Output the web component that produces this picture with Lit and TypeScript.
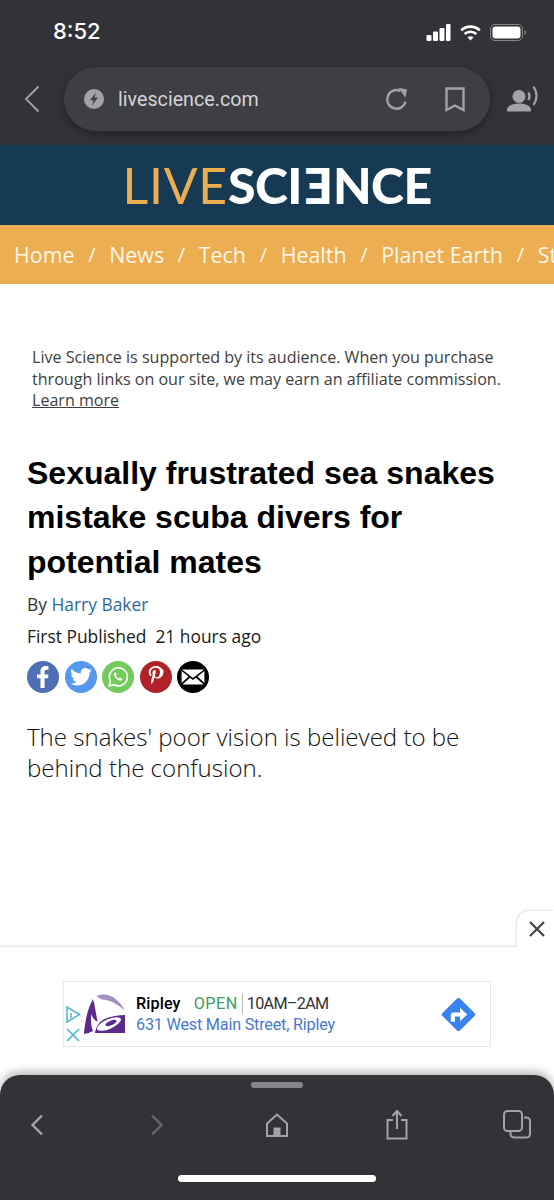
import { LitElement, html, css } from "lit";
import { customElement } from "lit/decorators.js";

@customElement("app-root")
export class AppRoot extends LitElement {
  static styles = css`
    :host { display: flex; flex-direction: column; width: 554px; height: 1200px; background: #fff; overflow: hidden; position: relative; font-family: "Open Sans", sans-serif; }
    svg { display: block; flex: none; }
    .chrome { background: #323337; height: 145px; flex: none; display: flex; flex-direction: column; }
    .status { display: flex; justify-content: space-between; align-items: center; height: 62px; padding: 0 28px 0 53px; }
    .time { color: #fff; font: 500 22px/30px Inter, sans-serif; padding-bottom: 1px; }
    .status-icons { display: flex; align-items: center; gap: 9px; margin-top: 2px; }
    .urlrow { display: flex; align-items: center; padding: 5px 0 0 24px; }
    .back { width: 40px; }
    .urlbar { width: 426px; height: 64px; border-radius: 32px; background: #3e3f44; box-shadow: 0 3px 10px rgba(0,0,0,.35); display: flex; align-items: center; padding: 0 25px 0 19px; box-sizing: border-box; }
    .urltext { color: #d4d4d6; font: 400 19.7px/24px Roboto, sans-serif; margin: 2px 0 0 13px; flex: 1; }
    .urlbar .reload { margin-right: 36px; }
    .reader { margin-left: 17px; }
    .logoband { background: #163a54; height: 80px; flex: none; display: flex; justify-content: center; align-items: center; }
    .logo { font: 50px/80px Lato, sans-serif; display: flex; white-space: nowrap; }
    .live { color: #ecae50; font-weight: 400; letter-spacing: .8px; }
    .sci { color: #fff; font-weight: 900; letter-spacing: -.6px; }
    .rev { display: inline-block; transform: scaleX(-1); margin-left: 3px; }
    .nav { background: #ecae50; height: 59px; flex: none; display: flex; align-items: center; padding-left: 14px; color: #fdf6ea; font-size: 21.4px; line-height: 30px; white-space: nowrap; overflow: hidden; }
    .nav i { font-style: normal; margin: 0 13.7px; font-size: 20px; }
    main { flex: 1; min-height: 0; padding: 63px 0 0 27px; }
    .disclosure { margin: 0 0 0 5px; width: 490px; color: #404040; font-size: 16.08px; line-height: 21.5px; }
    .disclosure a { color: inherit; text-decoration: underline; }
    h1 { margin: 39px 0 0; font: 700 32px/44.7px "Liberation Sans", Arial, sans-serif; color: #000; width: 510px; }
    .by { margin: 7px 0 0; font-size: 17.4px; line-height: 24px; color: #333; }
    .by a { color: #2b6a9e; }
    .pub { margin: 8px 0 0; font-size: 17.4px; line-height: 24px; color: #1a1a1a; }
    .share { display: flex; gap: 5.6px; margin-top: 13px; }
    .share span { width: 32px; height: 32px; border-radius: 50%; display: flex; align-items: center; justify-content: center; }
    .deck { margin: 28px 0 0; width: 470px; font-weight: 300; font-size: 24.05px; line-height: 31px; color: #111; }
    .adbar { height: 128px; flex: none; background: #fff; box-shadow: 0 -1px 2px rgba(0,0,0,.12); display: flex; align-items: flex-start; justify-content: center; padding-top: 34px; box-sizing: border-box; position: relative; }
    .closetab { position: absolute; right: 0; top: -36px; width: 37px; height: 36px; padding-left: 2px; box-sizing: border-box; background: #fff; border-radius: 12px 0 0 0; box-shadow: -1px -1px 2px rgba(0,0,0,.12); display: flex; align-items: center; justify-content: center; }
    .ad { width: 428px; height: 66px; box-sizing: border-box; border: 1px solid #e6e6e6; display: flex; align-items: center; padding-left: 2px; }
    .adicons { display: flex; flex-direction: column; gap: 5px; margin-top: 20px; }
    .adlogo { margin-left: 2px; }
    .adtext { margin-left: 9px; flex: 1; font: 400 16.2px/21px Roboto, sans-serif; white-space: nowrap; letter-spacing: -.2px; }
    .l1 { color: #111; display: flex; align-items: center; }
    .ripley { font-weight: 500; color: #000; letter-spacing: .1px; }
    .open { color: #3f9c5f; margin-left: 13px; letter-spacing: .5px; }
    .hours { color: #333; margin-left: 4px; padding-left: 4px; border-left: 1px solid #bbb; line-height: 20px; letter-spacing: -.7px; }
    .l2 { color: #4a78d0; }
    .dir { margin-right: 13px; }
    .toolbar { height: 125px; flex: none; background: #323337; border-radius: 20px 20px 0 0; box-shadow: 0 -3px 10px rgba(0,0,0,.3); display: flex; flex-direction: column; align-items: center; position: relative; }
    .grab { width: 52px; height: 6px; border-radius: 3px; background: #85868b; margin-top: 7px; flex: none; }
    .tools { align-self: stretch; display: grid; grid-template-columns: repeat(5, 120px); justify-content: center; justify-items: center; align-items: center; height: 50px; margin-top: 12px; flex: none; }
    .homebar { width: 198px; height: 7px; border-radius: 4px; background: #fff; margin-top: 25px; flex: none; }
  `;

  render() {
    const grey = "#a2a3a7";
    return html`
      <div class="chrome">
        <div class="status">
          <span class="time">8:52</span>
          <div class="status-icons">
            <svg width="25" height="18" viewBox="0 0 24 18" fill="#fff"><rect x="0" y="12" width="5" height="6" rx="1.2"/><rect x="6.5" y="8.5" width="5" height="9.5" rx="1.2"/><rect x="13" y="5" width="5" height="13" rx="1.2"/><rect x="19.5" y="1" width="4.5" height="17" rx="1.2"/></svg>
            <svg width="21" height="17" viewBox="0 0 21 17" fill="none" stroke="#fff" stroke-width="2.6"><path d="M1.2 6.4c5.3-5 13.3-5 18.6 0"/><path d="M4.6 10c3.4-3 8.4-3 11.8 0"/><path d="M10.5 16.5l-3-3.2c1.7-1.3 4.3-1.3 6 0z" fill="#fff" stroke="none"/></svg>
            <svg width="36" height="17" viewBox="0 0 36 17" fill="none"><rect x=".5" y=".5" width="32" height="16" rx="4.5" stroke="#85868a"/><rect x="2.5" y="2.5" width="28" height="12" rx="3" fill="#fff"/><path d="M34.5 6v5c.9-.3 1.5-1.400 1.5-2.500S35.400 6.300 34.500 6z" fill="#85868a"/></svg>
          </div>
        </div>
        <div class="urlrow">
          <div class="back"><svg width="16" height="28" viewBox="0 0 16 28" fill="none" stroke="#a2a3a7" stroke-width="1.8"><path d="M14.500 1.500L2 14l12.500 12.500"/></svg></div>
          <div class="urlbar">
            <svg width="22" height="22" viewBox="0 0 22 22"><circle cx="11" cy="11" r="10" fill="#a2a3a7"/><path d="M12.800 4.500L7 12.300h3.400l-1.300 5.200 5.900-7.900h-3.500z" fill="#3e3f44"/></svg>
            <span class="urltext">livescience.com</span>
            <svg class="reload" width="24" height="24" viewBox="0 0 24 24" fill="none" stroke="#a2a3a7" stroke-width="2.4"><path d="M20.500 14.800A9.300 9.300 0 1 1 15.500 4"/><path d="M13.500 0.800L22 2.500l-1.500 8.200z" fill="#a2a3a7" stroke="none"/></svg>
            <svg width="20" height="25" viewBox="0 0 20 25" fill="none" stroke="#a2a3a7" stroke-width="2.4"><path d="M1.500 1.500h17v21.500L10 18.500 1.500 23z"/></svg>
          </div>
          <svg class="reader" width="32" height="28" viewBox="0 0 32 28" fill="#a2a3a7"><circle cx="12" cy="11.500" r="6.500"/><path d="M0 25c0-4 5-6.500 12-6.500S24 21 24 25v1.500H0z"/><path d="M21.500 7.500c1.300 2.400 1.300 5.100 0 7.500" fill="none" stroke="#a2a3a7" stroke-width="2.4"/><path d="M26.500 1.500c3.800 5.800 3.800 12.700 0 18.500" fill="none" stroke="#a2a3a7" stroke-width="2.2"/></svg>
        </div>
      </div>
      <div class="logoband">
        <div class="logo"><span class="live">LIVE</span><span class="sci">SCI</span><span class="sci rev">E</span><span class="sci">NCE</span></div>
      </div>
      <nav class="nav">Home<i>/</i>News<i>/</i>Tech<i>/</i>Health<i>/</i>Planet Earth<i>/</i>St</nav>
      <main>
        <p class="disclosure">Live Science is supported by its audience. When you purchase through links on our site, we may earn an affiliate commission. <a>Learn more</a></p>
        <h1>Sexually frustrated sea snakes mistake scuba divers for potential mates</h1>
        <p class="by">By <a>Harry Baker</a></p>
        <p class="pub">First Published&nbsp; 21 hours ago</p>
        <div class="share">
          <span style="background:#4f6fb5"><svg width="12" height="22" viewBox="0 0 12 22" fill="#fff"><path d="M3.500 22V12.300H0V8.400h3.500V5.600C3.500 2 5.600 0 8.800 0c1.200 0 2.300.1 2.700.2v3.500H9.600c-1.800 0-2 .9-2 2.100v2.600h3.900l-.5 3.900H7.600V22z"/></svg></span>
          <span style="background:#5598ee"><svg width="22" height="18" viewBox="0 0 24 20" fill="#fff"><path d="M24 2.400c-.9.400-1.800.7-2.800.8 1-.6 1.800-1.500 2.200-2.700-1 .6-2 1-3.100 1.200A4.900 4.900 0 0 0 11.900 6.200 14 14 0 0 1 1.700.9a4.900 4.900 0 0 0 1.500 6.600c-.8 0-1.600-.2-2.200-.6v.1c0 2.400 1.700 4.400 3.900 4.800-.7.200-1.500.2-2.200.1.600 2 2.400 3.400 4.600 3.400A9.900 9.900 0 0 1 0 17.300 14 14 0 0 0 7.500 19.500c9.100 0 14-7.500 14-14v-.6c1-.7 1.800-1.500 2.500-2.500z"/></svg></span>
          <span style="background:#73cb5c"><svg width="22" height="22" viewBox="0 0 22 22" fill="none"><path d="M2 20l1.400-5A9 9 0 1 1 7 18.700z" stroke="#fff" stroke-width="1.6"/><path d="M8 6.500c-1 .6-1.300 1.800-.8 3 1 2.400 2.800 4.100 5.200 5 1.300.4 2.400 0 3-1 .2-.4.200-.8-.2-1l-1.700-.8c-.4-.2-.6 0-.9.300l-.5.600c-1.500-.5-2.600-1.600-3.200-3.100l.5-.5c.3-.3.300-.6.200-.9l-.7-1.600c-.2-.4-.5-.4-.9 0z" fill="#fff"/></svg></span>
          <span style="background:#b02227"><svg width="16" height="21" viewBox="0 0 16 21" fill="#fff"><path d="M8.300 0C3.200 0 .7 3.400.7 6.300c0 1.700.7 3.300 2 3.900.2.100.4 0 .5-.3l.2-.8c.1-.2 0-.3-.1-.5-.4-.5-.7-1.100-.7-2 0-2.600 2-4.900 5.100-4.900 2.800 0 4.300 1.700 4.300 4 0 3-1.300 5.600-3.300 5.600-1.100 0-1.900-.9-1.700-2 .3-1.300.9-2.800.9-3.700 0-.9-.5-1.600-1.400-1.600-1.100 0-2 1.200-2 2.700 0 1 .3 1.600.3 1.600l-1.400 5.700c-.4 1.700-.1 3.700 0 3.900 0 .1.200.2.300.1.100-.2 1.600-2 2.100-3.800l.8-3.100c.4.800 1.600 1.500 2.800 1.500 3.700 0 6.200-3.400 6.200-7.900C14.600 2.800 11.700 0 8.300 0z"/></svg></span>
          <span style="background:#000"><svg width="24" height="18" viewBox="0 0 24 18"><path d="M1 1.500h22L12 10z M.6 3L7.500 8.500.6 15z M23.400 3L16.500 8.500l6.900 6.500z M9 9.700l3 2.300 3-2.300 7.600 6.800H1.400z" fill="#fff"/></svg></span>
        </div>
        <p class="deck">The snakes' poor vision is believed to be behind the confusion.</p>
      </main>
      <div class="adbar">
        <div class="closetab"><svg width="18" height="18" viewBox="0 0 18 18" stroke="#444" stroke-width="2.2"><path d="M2 2l14 14M16 2L2 16"/></svg></div>
        <div class="ad">
          <div class="adicons">
            <svg width="15" height="17" viewBox="0 0 15 17" fill="none" stroke="#4fb8d2" stroke-width="1.5"><path d="M1 1l12.500 7.500L1 16z"/><path d="M5 7v5" /></svg>
            <svg width="14" height="14" viewBox="0 0 14 14" stroke="#4fb8d2" stroke-width="1.7"><path d="M1 1l12 12M13 1L1 13"/></svg>
          </div>
          <svg class="adlogo" width="44" height="42" viewBox="0 0 44 42"><path d="M13 3C24 -2 36 5 42 18 35 11 27 7 19 6.500z" fill="#a48fc4"/><path d="M10 6C5 15 2 27 1 41c3-.5 6-1.500 9-3-2-5-2.500-11-1.500-17 1 4 3 6.500 6 7.500C13 21 12 13 10 6z" fill="#5b2a8c"/><path d="M12 40c1-7 5-13 12-15 6-2 12-3 18-3v18z" fill="#5b2a8c"/><ellipse cx="26" cy="31" rx="13" ry="4.8" transform="rotate(-24 26 31)" fill="#fff"/><ellipse cx="28" cy="30" rx="6" ry="2.3" transform="rotate(-24 28 30)" fill="#5b2a8c"/></svg>
          <div class="adtext">
            <div class="l1"><span class="ripley">Ripley</span><span class="open">OPEN</span><span class="hours">10AM–2AM</span></div>
            <div class="l2">631 West Main Street, Ripley</div>
          </div>
          <svg class="dir" width="37" height="37" viewBox="0 0 36 36"><rect x="6" y="6" width="24" height="24" rx="2" transform="rotate(45 18 18)" fill="#3a82ee"/><path d="M10.500 25v-6.500c0-1.500 1-2.500 2.500-2.500h6.500v-4.500l7 6.500-7 6.500v-4.500H14.500v5z" fill="#fff"/></svg>
        </div>
      </div>
      <div class="toolbar">
        <div class="grab"></div>
        <div class="tools">
          <svg width="14" height="22" viewBox="0 0 14 22" fill="none" stroke="${grey}" stroke-width="2.4"><path d="M12 1.500L2.500 11 12 20.500"/></svg>
          <svg width="14" height="22" viewBox="0 0 14 22" fill="none" stroke="#66676b" stroke-width="2.4"><path d="M2 1.500L11.500 11 2 20.500"/></svg>
          <svg width="22" height="25" viewBox="0 0 22 25" fill="none" stroke="${grey}" stroke-width="2"><path d="M1 10.500L11 1.500l10 9V23H1z"/><rect x="7.500" y="14.500" width="7" height="9" fill="${grey}" stroke="none"/></svg>
          <svg width="22" height="30" viewBox="0 0 22 30" fill="none" stroke="${grey}" stroke-width="2"><path d="M7 10H1.500v18.500h19V10H15"/><path d="M11 19V2"/><path d="M6.500 6L11 1l4.500 5" stroke-width="2.2"/></svg>
          <svg width="28" height="30" viewBox="0 0 28 30" fill="none" stroke="${grey}" stroke-width="2"><rect x="1" y="1" width="18" height="20" rx="3.500"/><path d="M21 7.500h2.500a3.500 3.500 0 0 1 3.500 3.500v13a3.500 3.500 0 0 1-3.500 3.500H11A3.500 3.500 0 0 1 7.500 24v-2"/></svg>
        </div>
        <div class="homebar"></div>
      </div>
    `;
  }
}
